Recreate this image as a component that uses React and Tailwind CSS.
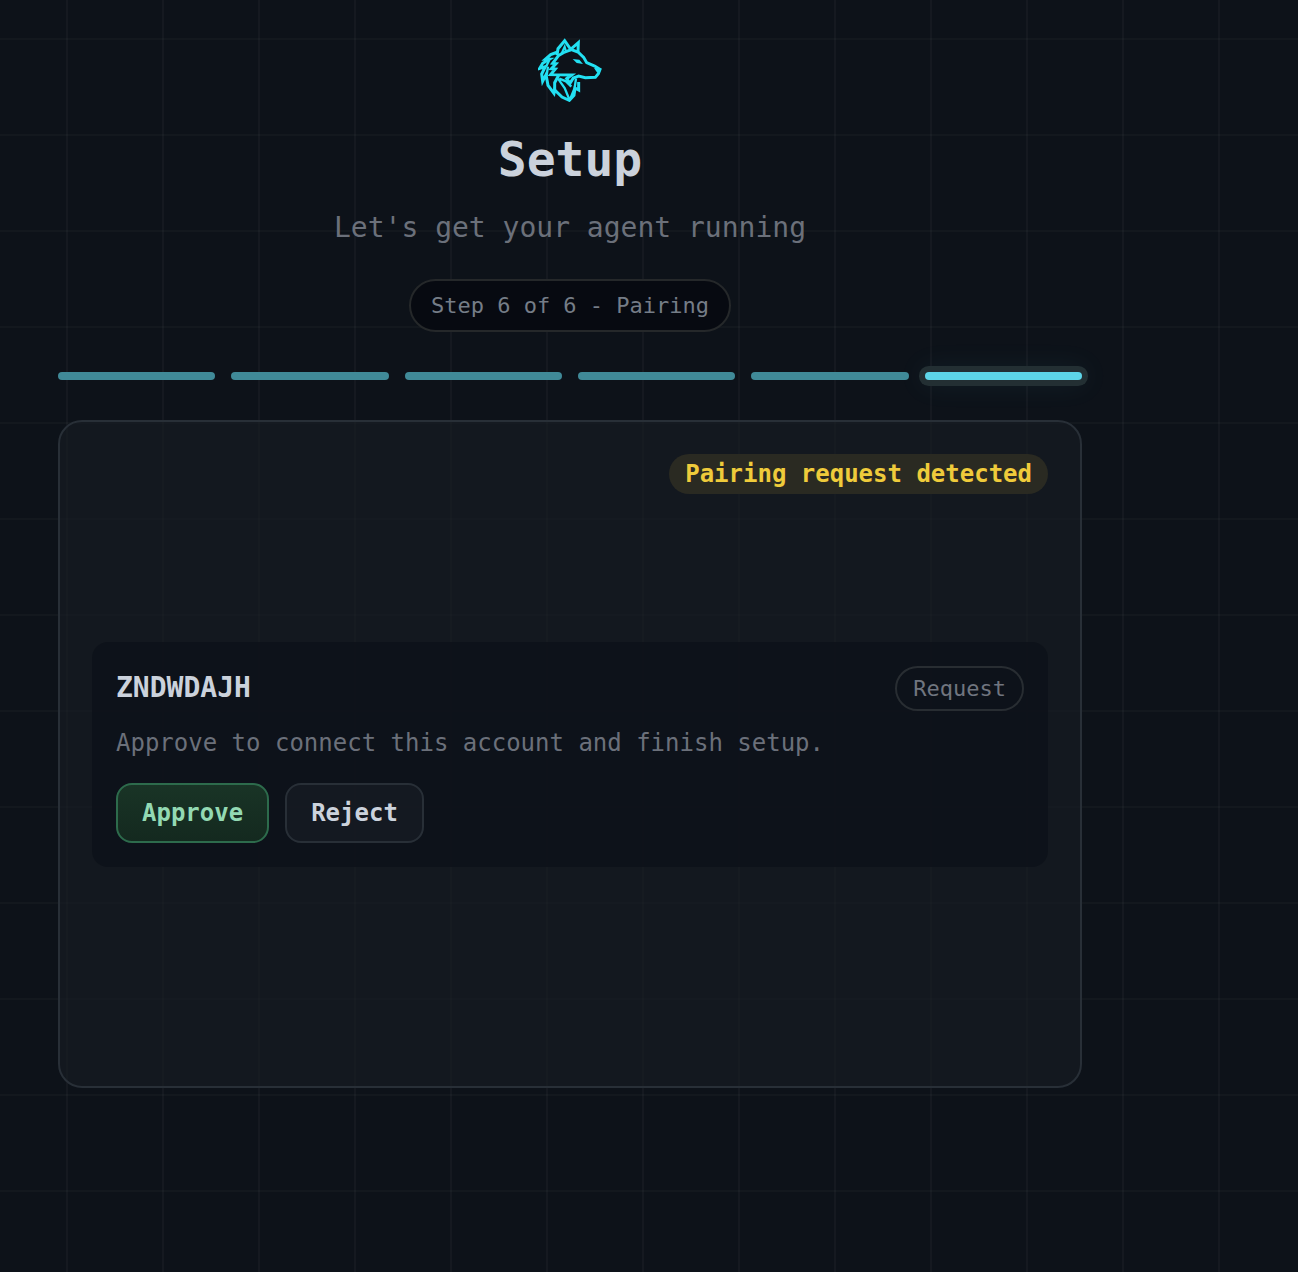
import React from "react";

const STEPS = ["Welcome", "Model", "Keys", "Channel", "Launch", "Pairing"];
const CURRENT_STEP = 6;

const WolfLogo = () => (
  <svg
    viewBox="12 12 192 192"
    className="w-16 h-16"
    fill="none"
    stroke="#22e0f2"
    strokeWidth="9"
    strokeLinejoin="miter"
    aria-hidden="true"
  >
    {/* ears */}
    <path d="M69 64 L72 44 L92 20 L110 46 L133 26 L132 54" />
    <path d="M82 60 L92 38 L96 52" strokeWidth="6" />
    {/* head and muzzle */}
    <path d="M110 46 L132 54 L149 70 L158 86 L182 96 L198 106 L193 119 L184 130 L154 131 L134 126 L118 132 L108 148 L98 134 L113 123 L50 122 L64 105 L52 104 L66 89 L56 88 L74 64 L92 54 L112 47" />
    <path d="M180 102 L202 103 L196 120 L188 114 Z" fill="#22e0f2" stroke="none" />
    <path d="M116 75 L136 77 L147 90 L128 87 Z" fill="#22e0f2" stroke="none" />
    {/* mane */}
    <path d="M71 54 L50 62 L34 76 L46 76 L26 88 L17 103 L34 98 L23 120 L26 142 L36 122 L42 154 L60 178 L62 168 L84 189 L106 199 L120 184 L123 162 L134 168 L134 144" />
    <path d="M46 78 L36 98 M42 98 L38 124" strokeWidth="7" />
    {/* neck */}
    <path d="M74 124 L62 146 L62 170" />
    <path d="M72 134 L92 162 L106 196 M76 134 L96 142 L112 158 M126 134 L122 162 L108 196" strokeWidth="7" />
  </svg>
);

const StepProgress = () => (
  <ol className="mt-10 grid grid-cols-6 gap-4">
    {STEPS.map((step, i) => (
      <li
        key={step}
        aria-label={step}
        className={`h-2 rounded-full ${
          i + 1 === CURRENT_STEP
            ? "bg-[#5dd5e8] shadow-[0_0_0_6px_#232f33,0_0_28px_6px_#5dd5e812]"
            : "bg-[#408a98]"
        }`}
      />
    ))}
  </ol>
);

const PairingRequest = ({ code }) => (
  <section className="rounded-2xl bg-[#0d1219]/90 p-6">
    <div className="flex items-center justify-between">
      <h2 className="text-[28px] leading-10 font-bold text-[#cbd2dc]">{code}</h2>
      <span className="rounded-full border-2 border-[#282d32] px-4 py-1 text-[22px] leading-[33px] text-[#70757f]">
        Request
      </span>
    </div>
    <p className="mt-3 text-2xl leading-10 text-[#6b707a]">
      Approve to connect this account and finish setup.
    </p>
    <div className="mt-5 flex gap-4">
      <button
        type="button"
        className="rounded-2xl border-2 border-[#2d6b4c] bg-linear-to-b from-[#193426] to-[#14291f] px-6 py-2.5 text-2xl leading-9 font-bold text-[#93d9b3]"
      >
        Approve
      </button>
      <button
        type="button"
        className="rounded-2xl border-2 border-[#282f37] bg-white/3 px-6 py-2.5 text-2xl leading-9 font-bold text-[#cbd2dc]"
      >
        Reject
      </button>
    </div>
  </section>
);

const App = () => {
  return (
    <div className="min-h-screen bg-[#0d1219] bg-[linear-gradient(to_right,#ffffff08_2px,transparent_2px),linear-gradient(to_bottom,#ffffff06_2px,transparent_2px)] bg-size-[96px_96px] bg-position-[66px_38px] pt-[38px] pr-6 pb-12 pl-[58px] font-['DejaVu_Sans_Mono',monospace]">
      <main className="w-full max-w-5xl">
        <header className="flex flex-col items-center text-center">
          <WolfLogo />
          <h1 className="mt-7 text-5xl leading-[58px] font-bold text-[#cbd2dc]">
            Setup
          </h1>
          <p className="mt-4 text-[28px] leading-12 text-[#6b707a]">
            Let's get your agent running
          </p>
          <p className="mt-[27px] rounded-full border-2 border-[#25282a] bg-[#070a11] px-5 py-2 text-[22px] leading-[33px] text-[#757d87]">
            Step 6 of 6 - Pairing
          </p>
        </header>

        <StepProgress />

        <div className="mt-10 grid min-h-[668px] grid-rows-[1fr_auto_1fr] rounded-3xl border-2 border-[#282f37] bg-[#181c23]/60 p-8">
          <div className="flex items-start justify-end">
            <span
              role="status"
              className="rounded-full bg-[#2a2a22] px-4 py-1 text-2xl leading-8 font-bold text-[#efcb3b]"
            >
              Pairing request detected
            </span>
          </div>
          <PairingRequest code="ZNDWDAJH" />
        </div>
      </main>
    </div>
  );
};

export default App;
